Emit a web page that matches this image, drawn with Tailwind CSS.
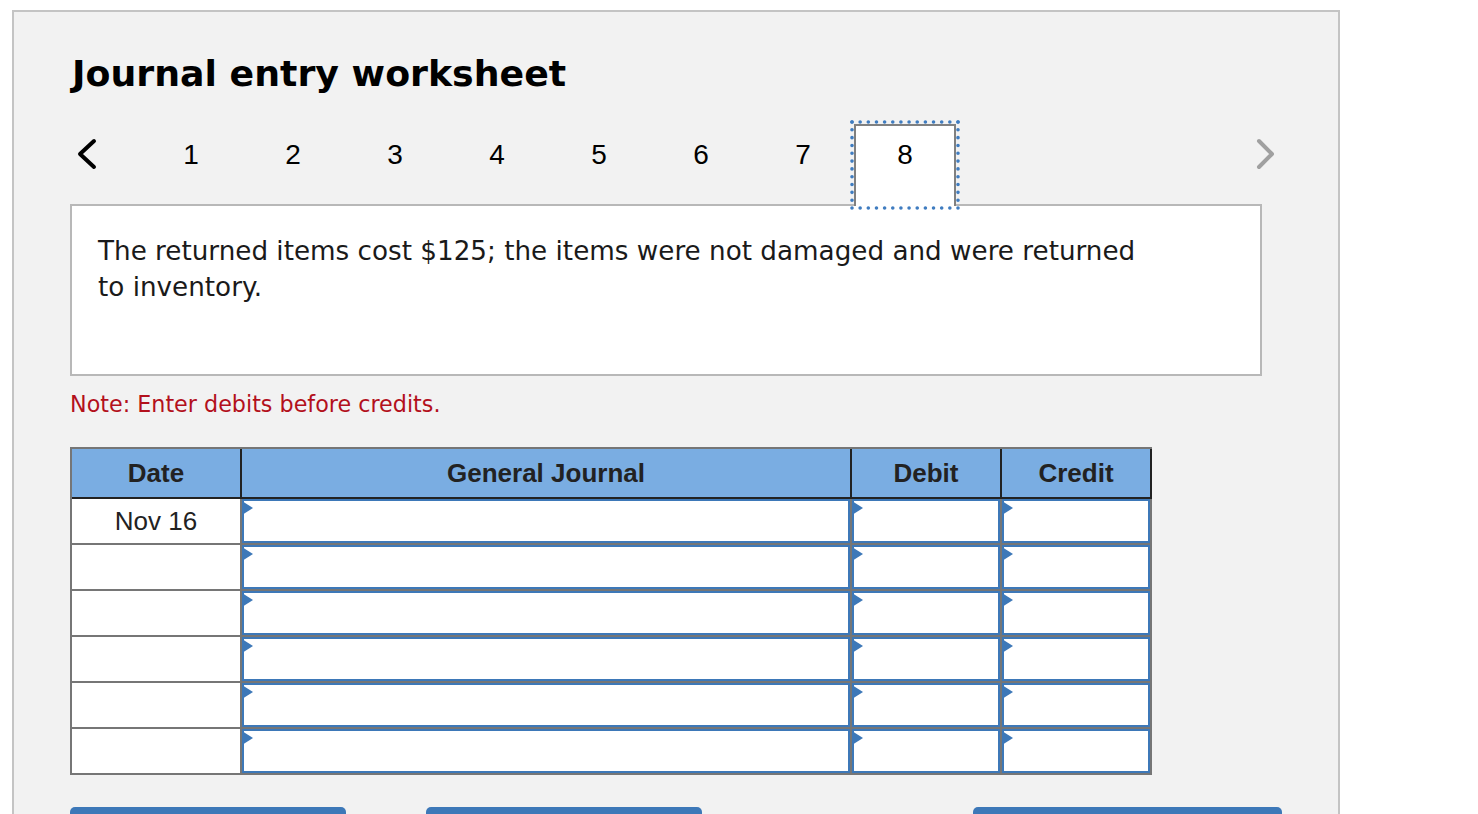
<!DOCTYPE html>
<html lang="en">
<head>
  <meta charset="UTF-8" />
  <title>Journal entry worksheet</title>
  <script src="https://cdn.jsdelivr.net/npm/@tailwindcss/browser@4"></script>
</head>
<body class="bg-white h-screen overflow-hidden font-['Liberation_Sans',sans-serif]">
  <div class="ml-3 mt-[10px] w-[1328px] h-[900px] border-2 border-[#c4c4c4] bg-[#f2f2f2] pl-[56px]">
    <!-- Title -->
    <h1 class="pt-[37px] pl-[2px] h-[110px] font-['DejaVu_Sans',sans-serif] font-bold text-[36.3px] leading-[49px] text-black">Journal entry worksheet</h1>

    <!-- Step tabs -->
    <div class="relative z-10 flex h-[84px] -mb-[2px]">
      <div class="w-[70px] pt-[16px]">
        <svg class="block ml-[5px]" width="24" height="32" viewBox="0 0 24 32" fill="none" stroke="#000" stroke-width="4" stroke-linecap="round" stroke-linejoin="round"><path d="M19 3 5 16l14 13"/></svg>
      </div>
      <div class="w-[102px] pt-[15px] text-center text-[28px] leading-[36px] text-black">1</div>
      <div class="w-[102px] pt-[15px] text-center text-[28px] leading-[36px] text-black">2</div>
      <div class="w-[102px] pt-[15px] text-center text-[28px] leading-[36px] text-black">3</div>
      <div class="w-[102px] pt-[15px] text-center text-[28px] leading-[36px] text-black">4</div>
      <div class="w-[102px] pt-[15px] text-center text-[28px] leading-[36px] text-black">5</div>
      <div class="w-[102px] pt-[15px] text-center text-[28px] leading-[36px] text-black">6</div>
      <div class="w-[102px] pt-[15px] text-center text-[28px] leading-[36px] text-black">7</div>
      <div class="relative w-[102px] mt-[2px] pt-[11px] text-center text-[28px] leading-[36px] text-black bg-white border-x-2 border-t-2 border-[#808080]">
        8
        <svg class="absolute left-[-6px] top-[-6px]" width="110" height="90" viewBox="0 0 110 90" fill="none" stroke="#3f7cc0" stroke-width="3.6" stroke-linecap="round">
          <path pathLength="13" stroke-dasharray="0 1" d="M2 2h106"/>
          <path pathLength="13" stroke-dasharray="0 1" d="M2 88h106"/>
          <path pathLength="11" stroke-dasharray="0 1" d="M2 2v86"/>
          <path pathLength="11" stroke-dasharray="0 1" d="M108 2v86"/>
        </svg>
      </div>
      <div class="ml-[298px] pt-[16px]">
        <svg class="block" width="24" height="32" viewBox="0 0 24 32" fill="none" stroke="#a0a0a0" stroke-width="4" stroke-linecap="round" stroke-linejoin="round"><path d="M5 3l13 13L5 29"/></svg>
      </div>
    </div>

    <!-- Transaction text -->
    <div class="w-[1192px] h-[172px] border-2 border-[#b8b8b8] bg-white pl-[26px] pt-[27px] font-['DejaVu_Sans',sans-serif] text-[26.23px] leading-[36px] text-[#1a1a1a]">
      The returned items cost $125; the items were not damaged and were returned<br>to inventory.
    </div>

    <p class="mt-[13px] h-[31px] font-['DejaVu_Sans',sans-serif] text-[22.25px] leading-[30px] text-[#b3101c]">Note: Enter debits before credits.</p>

    <!-- Journal table -->
    <div class="mt-[27px] w-[1082px] border-2 border-[#767676] border-r-0 bg-white">
      <div class="flex h-[50px] bg-[#7aade2] border-b-2 border-[#222222] font-bold text-[26px] leading-[48px] text-[#222222] text-center">
        <div class="w-[170px] border-r-2 border-[#222222]">Date</div>
        <div class="w-[610px] border-r-2 border-[#222222]">General Journal</div>
        <div class="w-[150px] border-r-2 border-[#222222]">Debit</div>
        <div class="w-[150px] border-r-2 border-[#222222]">Credit</div>
      </div>

      <div class="flex h-[46px] border-b-2 border-[#767676]">
        <div class="w-[170px] border-r-2 border-[#767676] text-center text-[26px] leading-[44px] text-[#222222]">Nov 16</div>
        <div class="relative w-[610px] border-r-2 border-[#767676]"><div class="h-full border-2 border-[#3d78b8]"></div><div class="absolute left-0 top-[2px] w-0 h-0 border-y-[7px] border-y-transparent border-l-[11px] border-l-[#3d78b8]"></div></div>
        <div class="relative w-[150px] border-r-2 border-[#767676]"><div class="h-full border-2 border-[#3d78b8]"></div><div class="absolute left-0 top-[2px] w-0 h-0 border-y-[7px] border-y-transparent border-l-[11px] border-l-[#3d78b8]"></div></div>
        <div class="relative w-[150px] border-r-2 border-[#767676]"><div class="h-full border-2 border-[#3d78b8]"></div><div class="absolute left-0 top-[2px] w-0 h-0 border-y-[7px] border-y-transparent border-l-[11px] border-l-[#3d78b8]"></div></div>
      </div>
      <div class="flex h-[46px] border-b-2 border-[#767676]">
        <div class="w-[170px] border-r-2 border-[#767676]"></div>
        <div class="relative w-[610px] border-r-2 border-[#767676]"><div class="h-full border-2 border-[#3d78b8]"></div><div class="absolute left-0 top-[2px] w-0 h-0 border-y-[7px] border-y-transparent border-l-[11px] border-l-[#3d78b8]"></div></div>
        <div class="relative w-[150px] border-r-2 border-[#767676]"><div class="h-full border-2 border-[#3d78b8]"></div><div class="absolute left-0 top-[2px] w-0 h-0 border-y-[7px] border-y-transparent border-l-[11px] border-l-[#3d78b8]"></div></div>
        <div class="relative w-[150px] border-r-2 border-[#767676]"><div class="h-full border-2 border-[#3d78b8]"></div><div class="absolute left-0 top-[2px] w-0 h-0 border-y-[7px] border-y-transparent border-l-[11px] border-l-[#3d78b8]"></div></div>
      </div>
      <div class="flex h-[46px] border-b-2 border-[#767676]">
        <div class="w-[170px] border-r-2 border-[#767676]"></div>
        <div class="relative w-[610px] border-r-2 border-[#767676]"><div class="h-full border-2 border-[#3d78b8]"></div><div class="absolute left-0 top-[2px] w-0 h-0 border-y-[7px] border-y-transparent border-l-[11px] border-l-[#3d78b8]"></div></div>
        <div class="relative w-[150px] border-r-2 border-[#767676]"><div class="h-full border-2 border-[#3d78b8]"></div><div class="absolute left-0 top-[2px] w-0 h-0 border-y-[7px] border-y-transparent border-l-[11px] border-l-[#3d78b8]"></div></div>
        <div class="relative w-[150px] border-r-2 border-[#767676]"><div class="h-full border-2 border-[#3d78b8]"></div><div class="absolute left-0 top-[2px] w-0 h-0 border-y-[7px] border-y-transparent border-l-[11px] border-l-[#3d78b8]"></div></div>
      </div>
      <div class="flex h-[46px] border-b-2 border-[#767676]">
        <div class="w-[170px] border-r-2 border-[#767676]"></div>
        <div class="relative w-[610px] border-r-2 border-[#767676]"><div class="h-full border-2 border-[#3d78b8]"></div><div class="absolute left-0 top-[2px] w-0 h-0 border-y-[7px] border-y-transparent border-l-[11px] border-l-[#3d78b8]"></div></div>
        <div class="relative w-[150px] border-r-2 border-[#767676]"><div class="h-full border-2 border-[#3d78b8]"></div><div class="absolute left-0 top-[2px] w-0 h-0 border-y-[7px] border-y-transparent border-l-[11px] border-l-[#3d78b8]"></div></div>
        <div class="relative w-[150px] border-r-2 border-[#767676]"><div class="h-full border-2 border-[#3d78b8]"></div><div class="absolute left-0 top-[2px] w-0 h-0 border-y-[7px] border-y-transparent border-l-[11px] border-l-[#3d78b8]"></div></div>
      </div>
      <div class="flex h-[46px] border-b-2 border-[#767676]">
        <div class="w-[170px] border-r-2 border-[#767676]"></div>
        <div class="relative w-[610px] border-r-2 border-[#767676]"><div class="h-full border-2 border-[#3d78b8]"></div><div class="absolute left-0 top-[2px] w-0 h-0 border-y-[7px] border-y-transparent border-l-[11px] border-l-[#3d78b8]"></div></div>
        <div class="relative w-[150px] border-r-2 border-[#767676]"><div class="h-full border-2 border-[#3d78b8]"></div><div class="absolute left-0 top-[2px] w-0 h-0 border-y-[7px] border-y-transparent border-l-[11px] border-l-[#3d78b8]"></div></div>
        <div class="relative w-[150px] border-r-2 border-[#767676]"><div class="h-full border-2 border-[#3d78b8]"></div><div class="absolute left-0 top-[2px] w-0 h-0 border-y-[7px] border-y-transparent border-l-[11px] border-l-[#3d78b8]"></div></div>
      </div>
      <div class="flex h-[46px] border-b-2 border-[#767676] -mb-[2px]">
        <div class="w-[170px] border-r-2 border-[#767676]"></div>
        <div class="relative w-[610px] border-r-2 border-[#767676]"><div class="h-full border-2 border-[#3d78b8]"></div><div class="absolute left-0 top-[2px] w-0 h-0 border-y-[7px] border-y-transparent border-l-[11px] border-l-[#3d78b8]"></div></div>
        <div class="relative w-[150px] border-r-2 border-[#767676]"><div class="h-full border-2 border-[#3d78b8]"></div><div class="absolute left-0 top-[2px] w-0 h-0 border-y-[7px] border-y-transparent border-l-[11px] border-l-[#3d78b8]"></div></div>
        <div class="relative w-[150px] border-r-2 border-[#767676]"><div class="h-full border-2 border-[#3d78b8]"></div><div class="absolute left-0 top-[2px] w-0 h-0 border-y-[7px] border-y-transparent border-l-[11px] border-l-[#3d78b8]"></div></div>
      </div>
    </div>

    <!-- Buttons, cut off by the window -->
    <div class="mt-[32px] flex w-[1212px]">
      <div class="w-[276px] h-[50px] rounded-[5px] bg-[#3d78b8]"></div>
      <div class="ml-[80px] w-[276px] h-[50px] rounded-[5px] bg-[#3d78b8]"></div>
      <div class="ml-auto w-[309px] h-[50px] rounded-[5px] bg-[#3d78b8]"></div>
    </div>
  </div>
</body>
</html>
